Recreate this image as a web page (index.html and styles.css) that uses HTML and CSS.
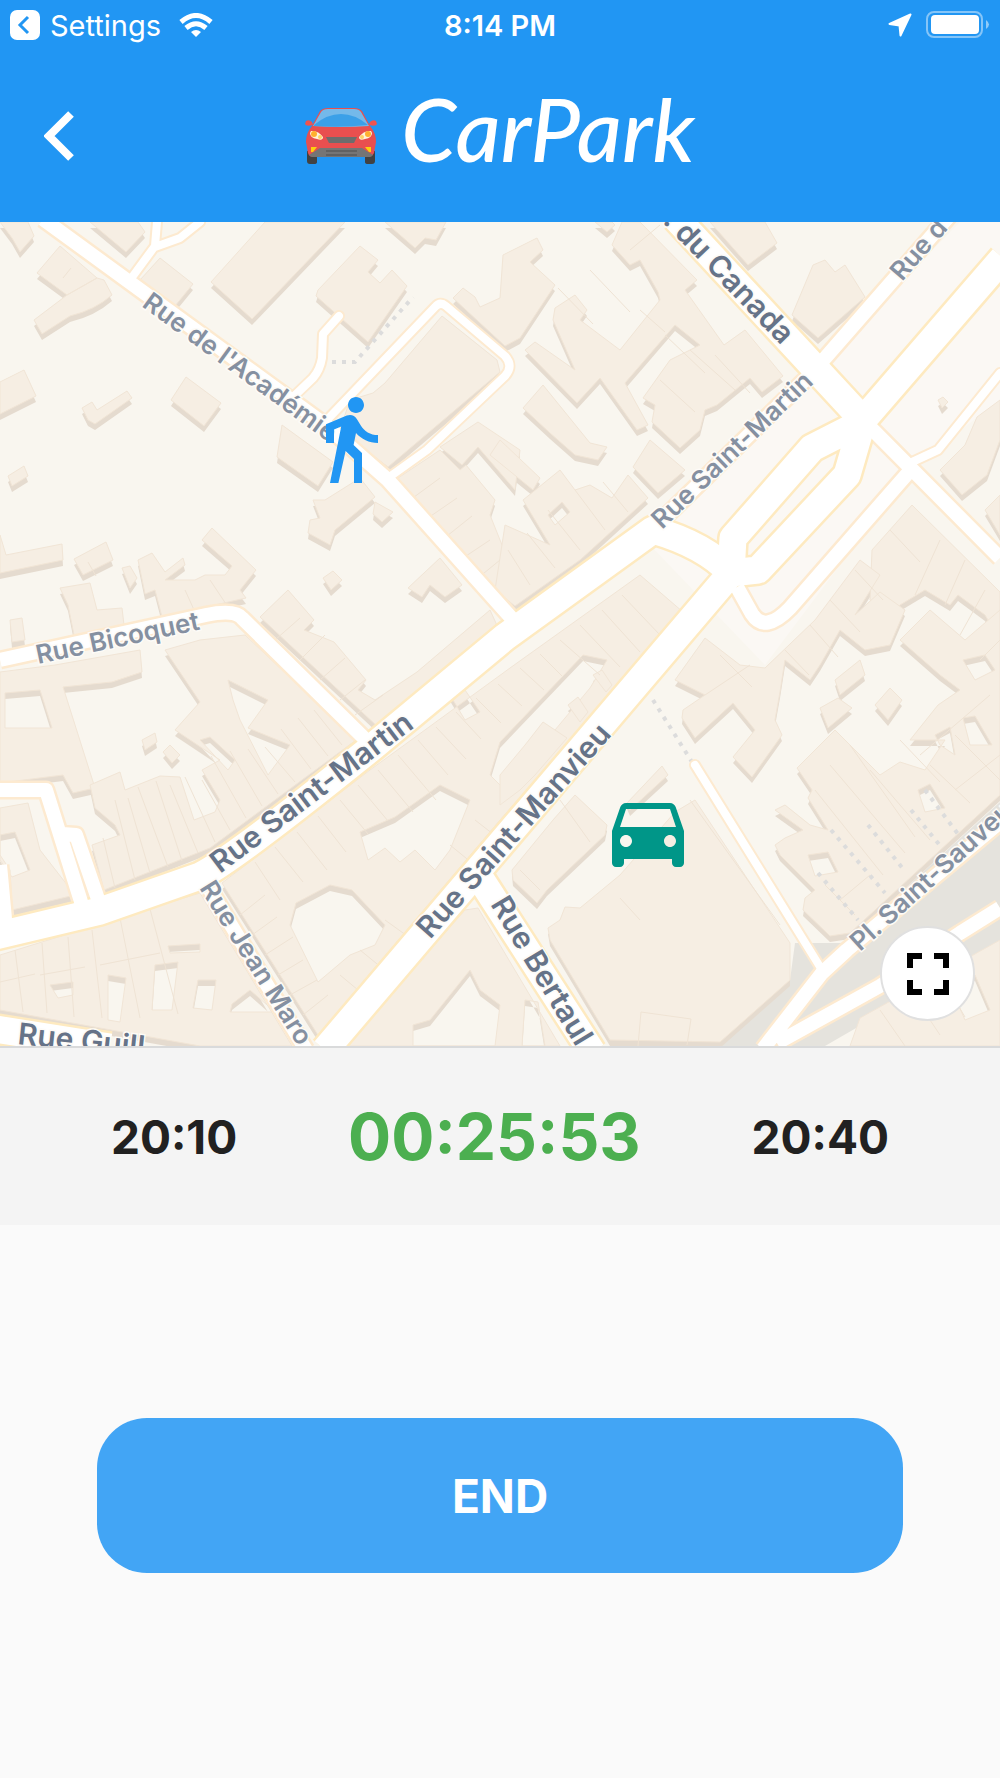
FILE: index.html
```html
<!DOCTYPE html>
<html lang="en">
<head>
  <meta charset="UTF-8" />
  <meta name="viewport" content="width=device-width, initial-scale=1.0"/>
  <title>CarPark</title>
  <link rel="stylesheet" href="styles.css">
</head>
<body>
  <header class="header">
    <div class="status-bar">
      <div class="status-left">
        <a class="status-back" href="#">
          <svg width="30" height="30" viewBox="0 0 30 30" aria-hidden="true">
            <rect width="30" height="30" rx="7" fill="#fff"/>
            <path d="M18 7l-8 8 8 8" fill="none" stroke="#2196f3" stroke-width="3"/>
          </svg>
          <span>Settings</span>
        </a>
        <svg width="34" height="25" viewBox="0 0 34 25" aria-hidden="true">
          <g fill="none" stroke="#fff" stroke-width="5">
            <path d="M2 9q15-13 30 0"/>
            <path d="M7 15q10-8.500 20 0"/>
          </g>
          <path d="M17 24l-5-5q5-4 10 0z" fill="#fff"/>
        </svg>
      </div>
      <time class="status-time">8:14 PM</time>
      <div class="status-right">
        <svg width="24" height="24" viewBox="0 0 24 24" aria-hidden="true">
          <path d="M22.500 1.500L12.500 22.500L11.500 12.500L1.500 11z" fill="#fff" stroke="#fff" stroke-width="2" stroke-linejoin="round"/>
        </svg>
        <svg width="64" height="28" viewBox="0 0 64 28" aria-hidden="true">
          <rect x="1" y="1" width="55" height="25" rx="7" fill="none" stroke="#fff" stroke-opacity=".45" stroke-width="2"/>
          <rect x="5" y="4" width="48" height="19" rx="4" fill="#fff"/>
          <path d="M60 9q6 4.500 0 9z" fill="#fff" fill-opacity=".5"/>
        </svg>
      </div>
    </div>

    <div class="title-bar">
      <button class="back" type="button" aria-label="Back">
        <svg width="30" height="50" viewBox="0 0 30 50" aria-hidden="true">
          <path d="M27 3L5 25l22 22" fill="none" stroke="#fff" stroke-width="8"/>
        </svg>
      </button>
      <div class="brand">
        <svg width="72" height="58" viewBox="0 0 72 58" aria-hidden="true">
          <path d="M2 44h10v11q0 2-3 2H5q-3 0-3-3zM60 44h10v10q0 3-3 3h-4q-3 0-3-2z" fill="#424242"/>
          <path d="M1 14q3-2 6 1l1 3q-7 2-8-1zM71 14q-3-2-6 1l-1 3q7 2 8-1z" fill="#ef5350"/>
          <path d="M7 19L15 4q3-3 8-3h26q5 0 8 3l8 15q6 7 6 16l-2 11q-2 4-6 4H9q-5 0-6-4L1 35q0-9 6-16z" fill="#e94f4f"/>
          <path d="M8 19L16 5q2-3 7-3h26q5 0 7 3l8 14q-28 2-56 0z" fill="#74b9ea"/>
          <path d="M9 18Q22 7 36 7t27 11q-27 3-54 1z" fill="#3ba0e8"/>
          <path d="M21 30h31l-3 6H24z" fill="#6d6d6d"/>
          <path d="M15 41h42l11 7q-1 2-4 2H8q-3 0-4-2z" fill="#757575"/>
          <path d="M21 44h31M21 48h31" stroke="#616161" stroke-width="2"/>
          <path d="M6 24q7-1 12 6 0 4-6 2-7-1-7-6zM66 24q-7-1-12 6 0 4 6 2 7-1 7-6z" fill="#fff3d8"/>
          <g fill="#ffb02e"><circle cx="9" cy="27" r="3"/><circle cx="63" cy="27" r="3"/></g>
          <g fill="#ffd166"><circle cx="15" cy="30" r="2"/><circle cx="57" cy="30" r="2"/></g>
          <path d="M6 40h6l-4 5H6zM66 40h-6l4 5h2z" fill="#fdd10d"/>
        </svg>
        <h1>CarPark</h1>
      </div>
    </div>
  </header>

  <main>
    <section class="map" aria-label="Map">
      <svg class="map-canvas" viewBox="0 222 1000 824">
        <defs>
          <g id="buildings" fill-rule="evenodd">
            <!-- north west -->
            <path d="M0 222L12 238 20 252 34 236 28 222zM90 222L126 252 145 232 138 222zM60 246L37 273 67 295 97 278zM97 278L67 295 34 320 42 334 70 316Q95 310 112 295L104 280zM160 258L193 284 175 306 140 280z"/>
            <path d="M265 222L211 282 252 319 345 222zM385 222L415 248 425 238 436 240 446 222zM360 246L378 260 368 272 380 283 392 270 407 286 368 342 316 296 318 290z"/>
            <path d="M0 382L24 370 36 396 0 414zM82 408L92 402 97 410 127 391 132 398 95 424 88 420zM186 377L221 403 204 426 171 400zM8 476L24 466 28 476 12 486z"/>
            <path d="M442 316L385 383 373 393 350 400 340 430 388 467 500 372 497 360zM282 425L333 462 318 486 277 457zM313 500L325 500 360 478 375 497 335 530 330 545 308 533 310 520 320 518zM375 502L393 512 382 522 373 514z"/>
            <path d="M453 298L463 288 475 297 480 307 500 298 503 255 537 238 543 250 530 262 555 285 520 338 505 346z"/>
            <!-- rue bicoquet -->
            <path d="M0 535L6 555 62 544 63 560 0 573zM74 559L106 542 113 560 83 575zM60 588L90 583 97 610 122 608 124 625 75 640 68 605zM10 620L22 618 25 640 12 642z"/>
            <path d="M212 528L256 570 240 590 246 598 162 617 155 590 145 594 138 560 152 553 165 572 183 558 185 565 165 580 195 580 205 575 225 575 232 566 202 540zM122 568L130 566 137 578 130 588z"/>
            <path d="M323 578L333 571 342 580 331 590zM408 588L440 558 462 585 445 597 430 585 422 597zM260 617L288 590 314 620 304 630 334 642 366 680 358 690 375 700 417 672 490 610 500 632 378 727z"/>
            <path d="M395 480L440 450 460 470 466 465 495 500 490 515 520 590 500 600zM440 447L478 422 520 450 515 490 478 447 462 465z"/>
            <path d="M0 672L55 665 140 650 142 672 112 682 63 687 95 788 73 793 63 775 0 783zM5 693L5 728 52 728 40 690z"/>
            <path d="M165 650L200 640 245 635 356 740 210 848 104 890 92 845 120 835 115 825 95 808 90 785 120 772 125 790 160 776 180 777 194 820 215 812 220 800 202 770 220 760 175 730 200 702zM200 740L210 737 235 760 228 770zM228 680L268 700 248 728 290 745 268 775 240 720 233 700zM142 740L155 733 157 742 145 750zM163 752L170 745 180 755 172 763z"/>
            <path d="M0 808L28 803 40 850 75 895 12 910 10 870 0 855zM0 835L15 832 30 870 12 877 0 860z"/>
            <!-- south west -->
            <path d="M0 955L200 893 292 1046 200 1046 0 1010zM108 975L126 978 120 1022 108 1020zM155 965L178 962 172 1010 152 1010zM198 980L216 980 212 1010 193 1008zM50 985L73 982 73 995 58 998zM168 946L200 944 200 952 170 953zM232 1004L250 990 275 1012 230 1012z"/>
            <path d="M222 883L370 770 510 668 640 575 683 612 500 820 318 1035zM296 903L330 885 352 890 385 925 375 945 350 955 318 982 290 925zM360 832L395 817 440 785 470 800 450 850 435 870 415 850 400 862 385 848 368 860zM500 742L583 655 607 660 590 688 505 790 490 775zM450 695L465 690 480 712 465 720z"/>
            <path d="M593 675L602 670 612 685 606 692zM568 705L578 697 588 712 580 722zM525 745L543 722 567 738 535 775 520 790 500 805 500 775z"/>
            <path d="M465 910L478 908 560 1046 345 1046zM430 1020L470 970 480 990 500 1005 495 1046 413 1046 413 1025zM525 1000L538 1002 545 1046 522 1046z"/>
            <!-- north -->
            <path d="M595 222L607 232 615 225 612 222zM622 222L640 222 697 280 685 290 724 345 745 330 783 376 762 392 750 378 717 405 705 410 700 430 680 448 652 422 655 405 643 398 670 360 700 345 675 325 625 383 648 425 637 430 600 378 577 403 525 350 535 342 575 370 553 320 555 308 575 295 587 310 580 320 620 350 660 300 658 292 640 260 630 265 612 245z"/>
            <path d="M710 222L765 222 777 243 748 265zM813 265L825 260 835 272 845 265 865 297 818 338 792 315zM543 385L590 443 607 447 598 460 575 455 550 433 523 408zM500 440L540 478 533 490 490 455zM650 440L685 470 658 493 633 467zM938 400L943 397 948 402 942 408z"/>
            <path d="M523 500L560 470 575 490 590 485 612 498 628 475 648 498 580 560 515 606 495 590 505 525 550 545zM548 515L562 502 570 512 555 525z"/>
            <!-- east -->
            <path d="M1000 400L977 417 965 445 940 470 962 495 987 475 1000 440zM985 510L1000 495 1000 535zM872 550L912 505 1000 592 1000 640 985 615 958 595 950 605 925 590 900 605 890 620 870 600z"/>
            <path d="M765 668L815 620 860 560 880 575 855 615 880 592 905 610 890 645 865 650 840 630 820 665 810 680 785 660 780 692 775 720 782 735 752 777 733 757 755 730 733 703 695 738 682 718 683 710 705 695 675 680 705 638 740 665z"/>
            <path d="M835 680L860 660 865 675 840 695zM820 708L838 698 852 708 828 728zM875 705L890 688 902 700 888 720z"/>
            <path d="M900 640L930 610 965 640 1000 610 1000 795 850 933 830 936 803 910 805 898 815 890 780 855 775 845 785 838 803 830 775 810 785 805 810 825 828 830 808 798 812 790 797 768 835 730 880 775 900 762 925 770 945 740 910 740 938 705 960 690 940 675zM963 660L985 655 995 670 975 680zM935 735L950 727 955 755 940 745zM963 718L975 716 992 745 970 745zM808 855L828 852 838 872 815 876zM918 790L930 784 945 808 925 812z"/>
            <path d="M850 1046L860 1018 1000 940 1000 1046zM950 985L975 975 990 1010 965 1020z"/>
            <!-- by the car park -->
            <path d="M575 795L607 825 605 835 547 890 537 903 513 880 512 870 553 820zM627 803L662 766 668 775 630 810z"/>
            <path d="M695 800L790 943 790 980 720 1042 610 1040 550 940 548 928 560 920 565 907 580 908 620 875 675 812z"/>
          </g>

          <g id="lanes">
            <path d="M157 222L155 246 130 280M155 247L180 238 200 222M339 316L323 334 322 358Q320 370 313 378L290 400"/>
            <path d="M325 422L435 307Q440 301 446 306L505 356Q514 366 505 376L427 450 388 478M1000 373L938 450 910 463M695 765L822 970"/>
          </g>
          <g id="streets">
            <path d="M43 219L328 427 388 480 515 622M0 660L206 615Q235 609 242 618L368 742M655 527L812 373 950 215M737 587L752 614Q765 634 790 608L908 473"/>
            <path d="M863 420L1000 558M0 790L46 790 83 908M62 834L76 835 99 902M0 865L6 930M210 890L306 1050M763 1049L822 973 847 950 1000 822M777 1043L880 986 960 933 1000 908"/>
          </g>
          <g id="avenues">
            <path d="M-5 936L100 911 200 876Q235 858 370 749L505 637 653 530Q705 545 731 573L325 1050M676 218L863 420 1003 258"/>
            <path d="M863 422L812 448 733 538 731 573 758 570 847 475 863 420M-5 1029L110 1047M480 878L592 1052"/>
          </g>
          <path id="manvieu" d="M430 940L653 689"/>
        </defs>

        <rect class="ground" y="222" width="1000" height="824"/>
        <path class="plaza" d="M658 525L815 370 960 222H1000V400L915 465 765 665 650 545z"/>
        <path class="square" d="M720 1046L790 980 795 943 845 943 1000 802V945L825 1046z"/>

        <use href="#buildings" class="wall" y="6"/>
        <use href="#buildings" class="roof"/>

        <!-- party walls -->
        <path class="party" d="M15 950l8 62M42 943l5 70M68 937l6 80M92 930l10 88M120 918l20 100M150 909l28 105M0 982l35-8M40 975l45-8M100 965l60-12M115 888l-12-50M135 880l-20-80M150 873l-22-75M168 867l-30-80M182 861l-26-80M198 853l-28-68M215 842l-30-65M230 830l-28-50M246 818l-35-62M262 806l-32-55M278 794l-30-45M295 782l-30-35M311 769l-30-40M328 756l-30-38M342 745l-28-35"/>
        <path class="party" d="M240 915l25-20M252 935l25-18M265 955l28-18M278 975l25-15M290 995l27-15M303 1015l25-20M255 862l25 38M275 847l28 35M297 832l30 38M318 816l28 36M340 800l28 34M358 785l30 36M378 770l35 42M398 755l38 45M418 740l30 35M436 727l30 32M456 712l25 27M476 698l25 25M498 684l24 22M520 668l24 22M540 654l22 22M560 640l40 35M580 625l40 42M602 610l38 42M622 595l38 40M340 975l18 15M360 950l22 18M385 920l25 18M450 845l22 18M475 820l18 14"/>
        <path class="party" d="M410 500l30-22M425 520l32-22M442 540l30-24M460 560l30-20M478 578l22-18M530 585l-22-35M555 568l-28-35M580 550l-32-40M605 530l-30-40M628 512l-25-30M558 288l35 36M590 270l40 42M630 250l30-25M640 310l25 22M665 335l40 38M690 350l45 40M660 380l35 32M715 355l35 38M300 660l25-25M320 680l25-22M340 700l25-20M355 715l28-20M275 640l25-22M185 590l10 22M210 580l16 24M88 562l8 14M63 278l8-10"/>
        <path class="party" d="M890 530l30 32M915 595l25-55M945 605l20-45M960 635l25-45M980 660l20-20M855 570l28 30M830 600l30 32M810 625l28 32M785 650l24 25M720 655l32 32M705 695l45-30M900 740l40 42M870 770l60 70M850 745l65 92M830 765l75 88M815 790l68 85M930 765l40 38M955 735l45 45M920 755l70-60M955 790l45-35M840 900l30-25M855 915l-30-30M880 1010l25 36M910 990l30 45M940 975l25 42M638 1046l3-34 50 7-4 26M560 800l30 42M520 870l20 20M640 920l-20-22M780 925L690 800"/>

        <path class="footpath" d="M332 362H355L413 297M653 700L692 762M831 830L885 893M818 873L858 920M868 825L904 870M911 810L942 848M925 790L958 834"/>

        <use href="#lanes" class="lane-casing"/>
        <use href="#streets" class="street-casing"/>
        <use href="#avenues" class="avenue-casing"/>
        <use href="#lanes" class="lane"/>
        <use href="#streets" class="street"/>
        <use href="#avenues" class="avenue"/>

        <g class="label">
          <text transform="translate(141 306) rotate(36)">Rue de l'Académie</text>
          <text transform="translate(38 664) rotate(-12)">Rue Bicoquet</text>
          <text transform="translate(662 530) rotate(-44)">Rue Saint-Martin</text>
          <text transform="translate(902 282) rotate(-49)">Rue d'</text>
          <text transform="translate(199 888) rotate(58)">Rue Jean Maro</text>
          <text transform="translate(860 952) rotate(-42)">Pl. Saint-Sauveur</text>
        </g>
        <g class="label label-main">
          <text transform="translate(662 222) rotate(46)">. du Canada</text>
          <text transform="translate(220 874) rotate(-37)">Rue Saint-Martin</text>
          <text><textPath href="#manvieu">Rue Saint-Manvieu</textPath></text>
          <text transform="translate(490 904) rotate(59)">Rue Bertaul</text>
          <text transform="translate(17 1044) rotate(6)">Rue Guill</text>
        </g>

        <!-- walker -->
        <svg x="302" y="391" width="96" height="96" viewBox="0 0 24 24">
          <path fill="#2196f3" d="M13.500 5.500c1.100 0 2-.9 2-2s-.9-2-2-2-2 .9-2 2 .9 2 2 2zM9.800 8.900L7 23h2.100l1.800-8 2.100 2v6h2v-7.500l-2.100-2 .6-3C14.800 12 16.800 13 19 13v-2c-1.900 0-3.500-1-4.300-2.400l-1-1.600c-.4-.6-1-1-1.700-1-.3 0-.5.1-.8.1L6 8.300V13h2V9.600l1.800-.7"/>
        </svg>
        <!-- parked car -->
        <svg x="600" y="783" width="96" height="96" viewBox="0 0 24 24">
          <path fill="#009688" d="M18.920 6.010C18.720 5.420 18.160 5 17.500 5h-11c-.66 0-1.210.42-1.420 1.010L3 12v8c0 .55.45 1 1 1h1c.55 0 1-.45 1-1v-1h12v1c0 .55.45 1 1 1h1c.55 0 1-.45 1-1v-8l-2.080-5.990zM6.500 16c-.83 0-1.500-.67-1.500-1.500S5.670 13 6.500 13s1.500.67 1.500 1.500S7.330 16 6.500 16zm11 0c-.83 0-1.500-.67-1.500-1.500s.67-1.500 1.500-1.500 1.500.67 1.500 1.500-.67 1.500-1.500 1.500zM5 11l1.500-4.500h11L19 11H5z"/>
        </svg>
      </svg>
      <button class="fullscreen" type="button" aria-label="Full screen">
        <svg width="72" height="72" viewBox="0 0 24 24" aria-hidden="true">
          <path d="M7 14H5v5h5v-2H7v-3zm-2-4h2V7h3V5H5v5zm12 7h-3v2h5v-5h-2v3zM14 5v2h3v3h2V5h-5z"/>
        </svg>
      </button>
    </section>

    <section class="timer">
      <time>20:10</time>
      <time class="remaining">00:25:53</time>
      <time>20:40</time>
    </section>

    <div class="actions">
      <button class="end" type="button">END</button>
    </div>
  </main>
</body>
</html>
```
FILE: styles.css
```css
* {
  box-sizing: border-box;
}

body {
  margin: 0;
  min-height: 100vh;
  font-family: Inter, "Liberation Sans", sans-serif;
  background: #fafafa;
  color: #212121;
  overflow-x: hidden;
}

svg {
  display: block;
}

button {
  border: none;
  padding: 0;
  font-family: inherit;
  cursor: pointer;
}

/* header */
.header {
  background: #2196f3;
  color: #fff;
}

.status-bar {
  display: grid;
  grid-template-columns: 1fr auto 1fr;
  align-items: center;
  height: 50px;
  padding: 0 10px;
  font-size: 29px;
}

.status-left,
.status-right,
.status-back {
  display: flex;
  align-items: center;
}

.status-left {
  gap: 18px;
}

.status-back {
  gap: 10px;
  color: #fff;
  text-decoration: none;
}

.status-time {
  font-weight: 600;
}

.status-right {
  justify-content: flex-end;
  gap: 14px;
}

.title-bar {
  display: grid;
  grid-template-columns: 1fr auto 1fr;
  align-items: center;
  height: 172px;
  padding: 0 44px;
}

.back {
  justify-self: start;
  background: none;
}

.brand {
  display: flex;
  align-items: center;
  gap: 24px;
}

h1 {
  margin: 0;
  padding-bottom: 16px;
  font-family: Lato, "Open Sans", sans-serif;
  font-size: 88px;
  font-style: italic;
  font-weight: 500;
  line-height: 1;
}

/* map */
.map {
  position: relative;
  overflow: hidden;
  border-bottom: 2px solid #d9dadb;
}

.map-canvas {
  width: 100%;
  height: auto;
}

.ground { fill: #f9f6ef; }
.plaza { fill: #fbf8f4; }
.square { fill: #e5e3dd; }
.wall { fill: #e5dbcf; }

.roof {
  fill: #f6eee3;
  stroke: #f1e5d6;
  stroke-width: 1;
}

.party {
  fill: none;
  stroke: #efe3d4;
  stroke-width: 1;
}

.footpath {
  fill: none;
  stroke: #dcdcdc;
  stroke-width: 4;
  stroke-dasharray: 4 6;
}

.lane-casing, .street-casing, .avenue-casing,
.lane, .street, .avenue {
  fill: none;
  stroke-linejoin: round;
}

.lane-casing, .street-casing { stroke: #fdead0; }
.avenue-casing { stroke: #feeac0; }
.lane, .street, .avenue { stroke: #fff; }

.lane-casing { stroke-width: 12; stroke-linecap: round; }
.lane { stroke-width: 8; stroke-linecap: round; }
.street-casing { stroke-width: 19; }
.street { stroke-width: 14; }
.avenue-casing { stroke-width: 32; }
.avenue { stroke-width: 27; }

.label {
  font-family: Inter, "Open Sans", sans-serif;
  font-size: 26px;
  font-weight: 600;
  fill: #8590a1;
  stroke: #fdfbf7;
  stroke-width: 3;
  paint-order: stroke;
}

.label-main {
  font-size: 30px;
  fill: #667388;
}

.fullscreen {
  position: absolute;
  right: 25px;
  bottom: 25px;
  display: grid;
  place-items: center;
  width: 95px;
  height: 95px;
  border: 2px solid #e0e0e0;
  border-radius: 50%;
  background: #fff;
}

/* timer */
.timer {
  display: flex;
  align-items: center;
  justify-content: space-evenly;
  height: 177px;
  background: #f4f4f4;
  font-size: 46px;
  font-weight: 700;
}

.remaining {
  font-size: 64px;
  color: #4caf50;
}

/* actions */
.actions {
  padding: 193px 97px;
}

.end {
  display: block;
  width: 100%;
  height: 155px;
  border-radius: 50px;
  background: #42a5f5;
  color: #fff;
  font-size: 46px;
  font-weight: 700;
}
```
